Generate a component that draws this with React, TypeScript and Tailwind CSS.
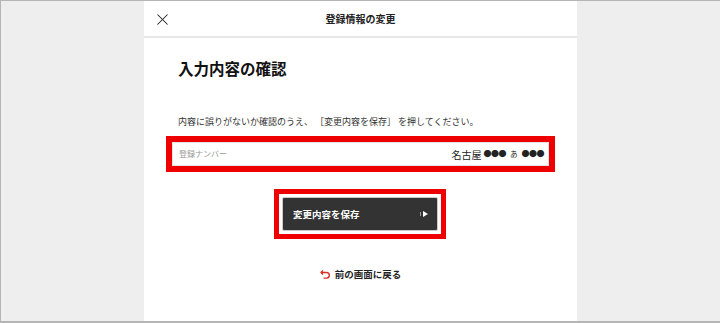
import { X } from 'lucide-react'

const jp = { fontFamily: '"Noto Sans CJK JP", "Noto Sans", sans-serif' }

function BackIcon() {
  return (
    <svg width="11" height="10" viewBox="0 0 11 10" fill="none" stroke="#d9302a" strokeWidth="1.4">
      <path d="M3 1.5 L1 3.5 L3 5.5" strokeLinejoin="round" />
      <path d="M1.2 3.5 H6.5 A2.8 2.8 0 0 1 6.5 9.1 H3.5" />
    </svg>
  )
}

export default function App() {
  return (
    <div className="h-[323px] w-[720px] overflow-hidden border-b-2 border-l border-t border-[#b5b5b5] bg-[#eeeeee]" style={jp}>
      <div className="ml-[143px] flex h-full w-[433px] flex-col bg-white">
        <div className="relative flex h-[37px] shrink-0 items-center justify-center border-b-2 border-[#e6e6e6]">
          <X className="absolute left-[9px] top-[9px] h-[19px] w-[19px] text-[#222]" strokeWidth={1.3} />
          <span className="text-[10px] font-bold text-[#222]">登録情報の変更</span>
        </div>

        <div className="flex flex-col px-[34px] pt-[18px]">
          <h1 className="text-[15.5px] font-bold leading-6 text-[#111]">入力内容の確認</h1>
          <p className="mt-[35px] text-[9px] leading-[14px] text-[#333]">
            内容に誤りがないか確認のうえ、 ［変更内容を保存］ を押してください。
          </p>
        </div>

        <div className="mx-[22px] mt-[7px] border-[6px] border-[#ee0000]">
          <div className="flex h-[24px] items-center justify-between border border-[#e4e4e4] bg-white pl-[6px] pr-[4px]">
            <span className="text-[8px] text-[#999]">登録ナンバー</span>
            <span className="flex items-center gap-[2px] text-[10px] text-[#222]">
              名古屋<span className="text-[8px] tracking-[-0.5px]">●●●</span>
              <span className="ml-[2px] text-[7.5px]">あ</span>
              <span className="ml-[2px] text-[8px] tracking-[-0.5px]">●●●</span>
            </span>
          </div>
        </div>

        <div className="mt-[17px] flex justify-center">
          <div className="ml-[-1px] border-[5px] border-[#ee0000] bg-white p-[3px]">
            <button className="flex h-[34px] w-[156px] items-center justify-between rounded-[2px] border border-[#c8c8c8] bg-[#333333] pl-[10px] pr-[9px]">
              <span className="text-[9.5px] font-bold text-white">変更内容を保存</span>
              <span className="flex items-center gap-[2px]">
                <span className="h-[4px] w-px bg-[#999]" />
                <span className="h-0 w-0 border-y-[3px] border-l-[5px] border-y-transparent border-l-white" />
              </span>
            </button>
          </div>
        </div>

        <div className="mt-[28px] flex items-center justify-center gap-[4px]">
          <BackIcon />
          <span className="text-[9.5px] font-bold text-[#222]">前の画面に戻る</span>
        </div>
      </div>
    </div>
  )
}
